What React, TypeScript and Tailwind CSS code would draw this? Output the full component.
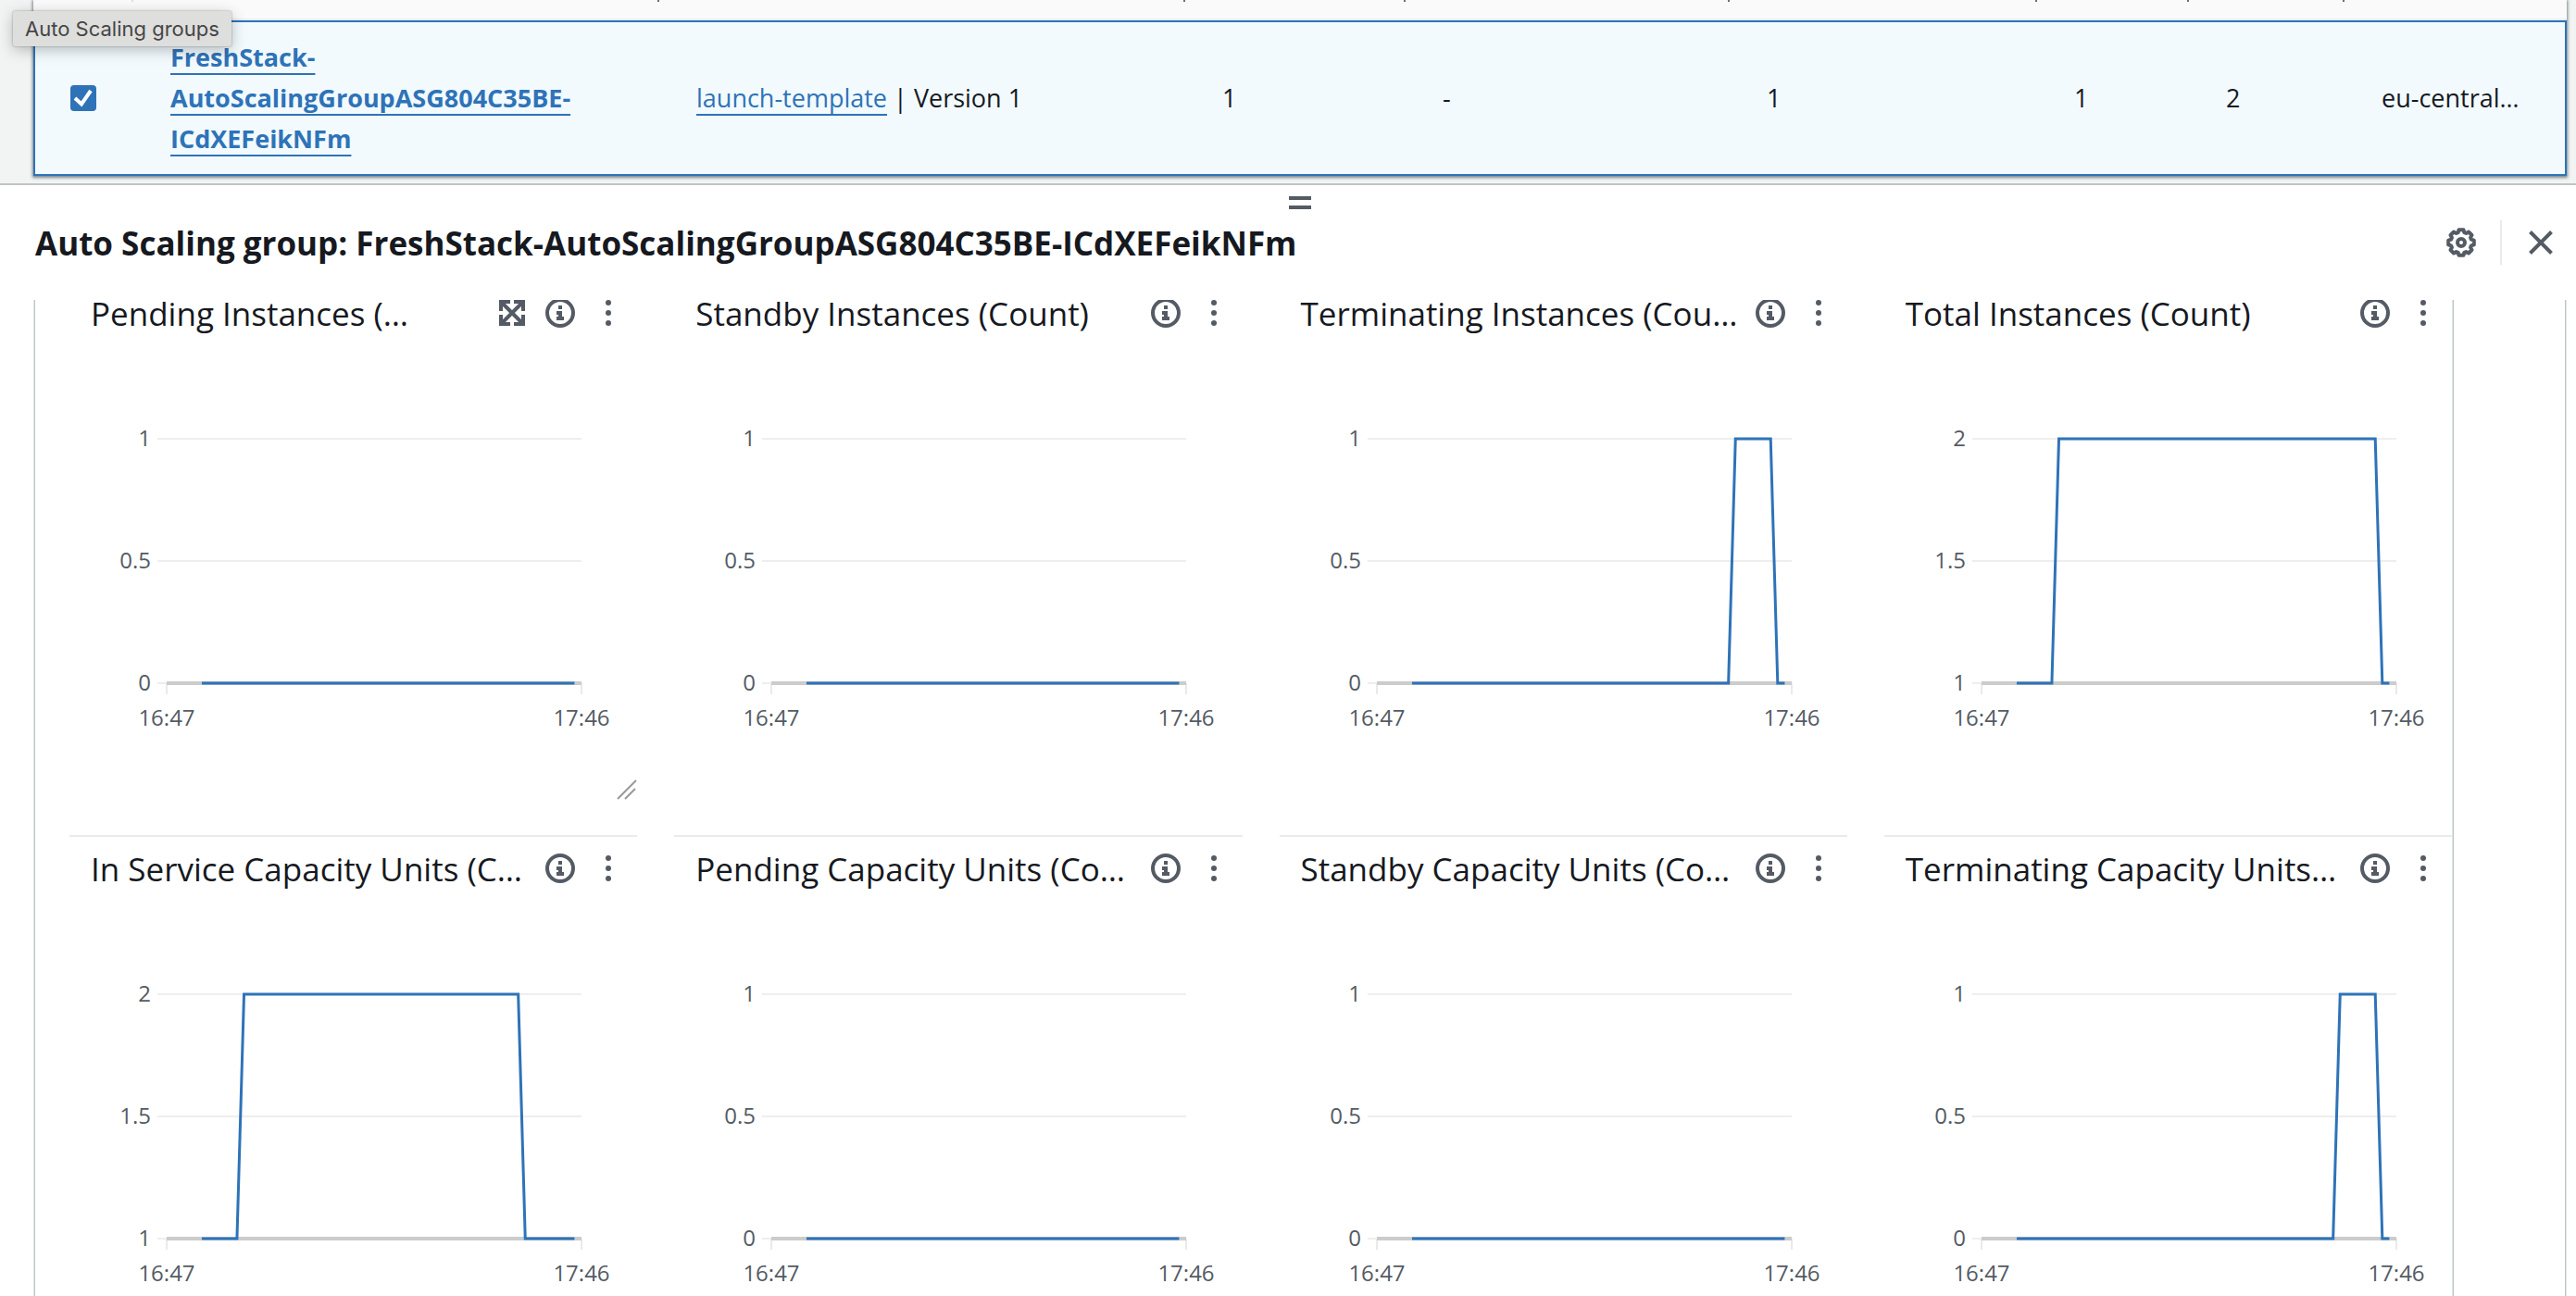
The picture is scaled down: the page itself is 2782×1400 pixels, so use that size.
import type { ReactNode } from "react";

type Chart = {
  title: string;
  ticks: [string, string, string];
  /** [minutes after 16:47, level between 0 (bottom) and 1 (top)] */
  points: [number, number][];
  active?: boolean;
};

const flat: [number, number][] = [[5, 0], [58, 0]];
const spike: [number, number][] = [[5, 0], [50, 0], [51, 1], [56, 1], [57, 0], [58, 0]];

const charts: Chart[] = [
  { title: "Pending Instances (…", ticks: ["1", "0.5", "0"], points: flat, active: true },
  { title: "Standby Instances (Count)", ticks: ["1", "0.5", "0"], points: flat },
  { title: "Terminating Instances (Cou…", ticks: ["1", "0.5", "0"], points: spike },
  {
    title: "Total Instances (Count)",
    ticks: ["2", "1.5", "1"],
    points: [[5, 0], [10, 0], [11, 1], [56, 1], [57, 0], [58, 0]],
  },
  {
    title: "In Service Capacity Units (C…",
    ticks: ["2", "1.5", "1"],
    points: [[5, 0], [10, 0], [11, 1], [50, 1], [51, 0], [58, 0]],
  },
  { title: "Pending Capacity Units (Co…", ticks: ["1", "0.5", "0"], points: flat },
  { title: "Standby Capacity Units (Co…", ticks: ["1", "0.5", "0"], points: flat },
  { title: "Terminating Capacity Units…", ticks: ["1", "0.5", "0"], points: spike },
];

const TOP = 102;
const BOTTOM = 366;
const LEFT = 105;
const RIGHT = 553;

function LineChart({ chart }: { chart: Chart }) {
  const line = chart.points
    .map(([m, v]) => `${LEFT + (m / 59) * (RIGHT - LEFT)},${BOTTOM - v * (BOTTOM - TOP)}`)
    .join(" ");
  return (
    <svg
      viewBox="0 0 613 430"
      preserveAspectRatio="xMinYMin meet"
      className="block h-[430px] w-full"
      role="img"
      aria-label={chart.title}
    >
      {[TOP, (TOP + BOTTOM) / 2, BOTTOM].map((y, i) => (
        <g key={y}>
          <line x1={LEFT - 10} x2={RIGHT} y1={y} y2={y} stroke="#eeeeee" strokeWidth="2" />
          <text x={LEFT - 17} y={y + 8} textAnchor="end" fill="#545b64" fontSize="24">
            {chart.ticks[i]}
          </text>
        </g>
      ))}
      <path
        d={`M${LEFT} ${BOTTOM}v12M${RIGHT} ${BOTTOM}v12`}
        stroke="#eaeaea"
        strokeWidth="2"
      />
      <line x1={LEFT} x2={RIGHT} y1={BOTTOM} y2={BOTTOM} stroke="#cccccc" strokeWidth="4" />
      <polyline points={line} fill="none" stroke="#2e73b8" strokeWidth="3" />
      <text x={LEFT} y="412" textAnchor="middle" fill="#545b64" fontSize="24">
        16:47
      </text>
      <text x={RIGHT} y="412" textAnchor="middle" fill="#545b64" fontSize="24">
        17:46
      </text>
    </svg>
  );
}

function ExpandIcon() {
  return (
    <svg viewBox="0 0 28 28" className="block size-7" fill="none" stroke="currentColor" strokeWidth="4">
      <path d="M12 2H2V12M16 2H26V12M12 26H2V16M16 26H26V16M3 3L25 25M25 3L3 25" />
    </svg>
  );
}

function InfoIcon() {
  return (
    <svg viewBox="0 0 32 32" className="block size-8">
      <circle cx="16" cy="16" r="14" fill="none" stroke="currentColor" strokeWidth="4" />
      <path fill="currentColor" d="M14 8h4v4h-4zM12 14h6v6h2v4h-8v-4h2v-2h-2z" />
    </svg>
  );
}

function DotsIcon() {
  return (
    <svg viewBox="0 0 6 32" className="block h-8 w-[6px]" fill="currentColor">
      <circle cx="3" cy="5" r="3" />
      <circle cx="3" cy="16" r="3" />
      <circle cx="3" cy="27" r="3" />
    </svg>
  );
}

const gearOutline = Array.from({ length: 8 }, (_, k) =>
  [
    [-10, 14],
    [10, 14],
    [17, 11.4],
    [28, 11.4],
  ].map(([offset, radius]) => {
    const a = ((k * 45 + offset - 90) * Math.PI) / 180;
    return `${(16 + radius * Math.cos(a)).toFixed(2)},${(16 + radius * Math.sin(a)).toFixed(2)}`;
  }),
)
  .flat()
  .join(" ");

function GearIcon() {
  return (
    <svg viewBox="0 0 32 32" className="block size-8" fill="none" stroke="currentColor" strokeWidth="4">
      <polygon points={gearOutline} strokeLinejoin="round" />
      <circle cx="16" cy="16" r="4" />
    </svg>
  );
}

function IconButton({ label, className, children }: { label: string; className?: string; children: ReactNode }) {
  return (
    <button type="button" aria-label={label} className={className}>
      {children}
    </button>
  );
}

function Widget({ chart }: { chart: Chart }) {
  return (
    <section className="border-t-2 border-[#eaeaea]">
      <header className="flex h-[68px] items-center pr-7 pl-[23px] text-[#545b64]">
        <h3 className="flex-1 pt-[2px] text-[35px] leading-7 whitespace-nowrap text-[#16191f]">
          {chart.title}
        </h3>
        {chart.active && (
          <IconButton label="Maximize" className="mr-[22px]">
            <ExpandIcon />
          </IconButton>
        )}
        <IconButton label="Info" className="mr-[33px]">
          <InfoIcon />
        </IconButton>
        <IconButton label="Widget actions">
          <DotsIcon />
        </IconButton>
      </header>
      <LineChart chart={chart} />
      {chart.active && (
        <div className="flex justify-end pt-10">
          <svg viewBox="0 0 22 22" className="block size-[22px]" stroke="#999999" strokeWidth="2">
            <path d="M1 21L21 1M9 21L20 10" />
          </svg>
        </div>
      )}
    </section>
  );
}

const columns: { label: string; width: string; faint?: boolean }[] = [
  { label: "Select", width: "w-[108px]", faint: true },
  { label: "Name", width: "w-[568px]" },
  { label: "Launch template/configuration", width: "w-[568px]" },
  { label: "Instances", width: "w-[238px]" },
  { label: "Status", width: "w-[350px]" },
  { label: "Desired capacity", width: "w-[332px]" },
  { label: "Min", width: "w-[164px]" },
  { label: "Max", width: "w-[168px]" },
  { label: "Availability Zones", width: "w-[240px]" },
];

const cell = "border-y-2 border-[#2e73b8] py-4 pl-10 text-left";

function GroupsTable() {
  return (
    <div className="mr-[10px] ml-9 bg-[#fafafa] shadow-[0_1px_3px_1px_rgba(0,28,36,0.5)]">
      <table className="w-full table-fixed border-separate border-spacing-0 text-[27px] leading-[44px]">
        <thead>
          <tr>
            {columns.map((c, i) => (
              <th
                key={c.label}
                scope="col"
                aria-label={c.label}
                className={`${c.width} h-[22px] border-b-2 border-[#eaeded] p-0 align-top`}
              >
                {i < columns.length - 1 && (
                  <div className={`ml-auto h-[2px] w-[2px] ${c.faint ? "bg-[#dddddd]" : "bg-[#687078]"}`} />
                )}
              </th>
            ))}
          </tr>
        </thead>
        <tbody>
          <tr className="bg-[#f2fafd]">
            <td className="border-y-2 border-l-2 border-[#2e73b8] pl-[38px]">
              <label className="relative block size-7">
                <input
                  type="checkbox"
                  defaultChecked
                  aria-label="Select FreshStack-AutoScalingGroupASG804C35BE-ICdXEFeikNFm"
                  className="block size-7 appearance-none rounded-[4px] bg-[#2e73b8]"
                />
                <svg viewBox="0 0 28 28" className="absolute inset-0 size-7" fill="none" stroke="white" strokeWidth="4">
                  <path d="M5 14L12 20.500L22 6" />
                </svg>
              </label>
            </td>
            <td className={cell}>
              <a
                href="#group"
                className="font-bold text-[#2e73b8] underline decoration-2 underline-offset-[7px] [text-decoration-skip-ink:none]"
              >
                FreshStack-
                <br />
                AutoScalingGroupASG804C35BE-
                <br />
                ICdXEFeikNFm
              </a>
            </td>
            <td className={cell}>
              <a
                href="#template"
                className="text-[#2e73b8] underline decoration-2 underline-offset-[7px] [text-decoration-skip-ink:none]"
              >
                launch-template
              </a>{" "}
              | Version 1
            </td>
            <td className={cell}>1</td>
            <td className={cell}>-</td>
            <td className={cell}>1</td>
            <td className={cell}>1</td>
            <td className={cell}>2</td>
            <td className={`${cell} border-r-2 whitespace-nowrap`}>eu-central…</td>
          </tr>
        </tbody>
      </table>
    </div>
  );
}

export default function App() {
  return (
    <div className="relative flex h-screen flex-col overflow-hidden bg-white font-['Open_Sans',sans-serif] text-[#16191f]">
      <div className="h-[198px] shrink-0 overflow-hidden bg-[#f2f3f3]">
        <GroupsTable />
      </div>

      <div
        role="tooltip"
        className="absolute top-3 left-[14px] rounded-[2px] bg-[#dededd] px-[13px] py-1 font-['Inter',sans-serif] text-[22px] leading-[30px] text-[#464646] shadow-[0_4px_16px_rgba(0,0,0,0.25),0_0_2px_rgba(0,0,0,0.4)]"
      >
        Auto Scaling groups
      </div>

      <div className="relative flex min-h-0 flex-1 flex-col border-t-2 border-[#bfc4c4] bg-white">
        <div className="mr-[11px] ml-[37px] flex justify-center pt-3">
          <button type="button" aria-label="Resize panel" className="flex flex-col gap-[6px]">
            <span className="h-1 w-6 bg-[#545b64]" />
            <span className="h-1 w-6 bg-[#545b64]" />
          </button>
        </div>
        <header className="mt-3 mb-[38px] flex h-12 shrink-0 items-center pr-[25px] pl-[38px] text-[#545b64]">
          <h2 className="flex-1 pt-[2px] text-[35px] leading-[44px] font-bold whitespace-nowrap text-[#16191f]">
            Auto Scaling group: FreshStack-AutoScalingGroupASG804C35BE-ICdXEFeikNFm
          </h2>
          <IconButton label="Preferences">
            <GearIcon />
          </IconButton>
          <div className="mr-[29px] ml-[26px] h-12 w-[2px] bg-[#eaeaea]" />
          <IconButton label="Close panel">
            <svg viewBox="0 0 26 26" className="block size-[26px]" stroke="currentColor" strokeWidth="4">
              <path d="M1.500 1.500L24.500 24.500M24.500 1.500L1.500 24.500" />
            </svg>
          </IconButton>
        </header>

        <main className="mr-[11px] ml-[37px] flex min-h-0 flex-1 border-r border-[#bcc6c6] shadow-[1px_0_0_#e1e6e6]">
          <div className="mr-[120px] min-w-0 flex-1 overflow-hidden border-x border-[#bcc6c6] shadow-[-1px_0_0_#e1e6e6,inset_-1px_0_0_#e1e6e6]">
            <div className="-mt-[22px] grid auto-rows-[600px] grid-cols-4 gap-x-10 pr-[1px] pl-[37px]">
              {charts.map((c) => (
                <Widget key={c.title} chart={c} />
              ))}
            </div>
          </div>
        </main>
      </div>
    </div>
  );
}
